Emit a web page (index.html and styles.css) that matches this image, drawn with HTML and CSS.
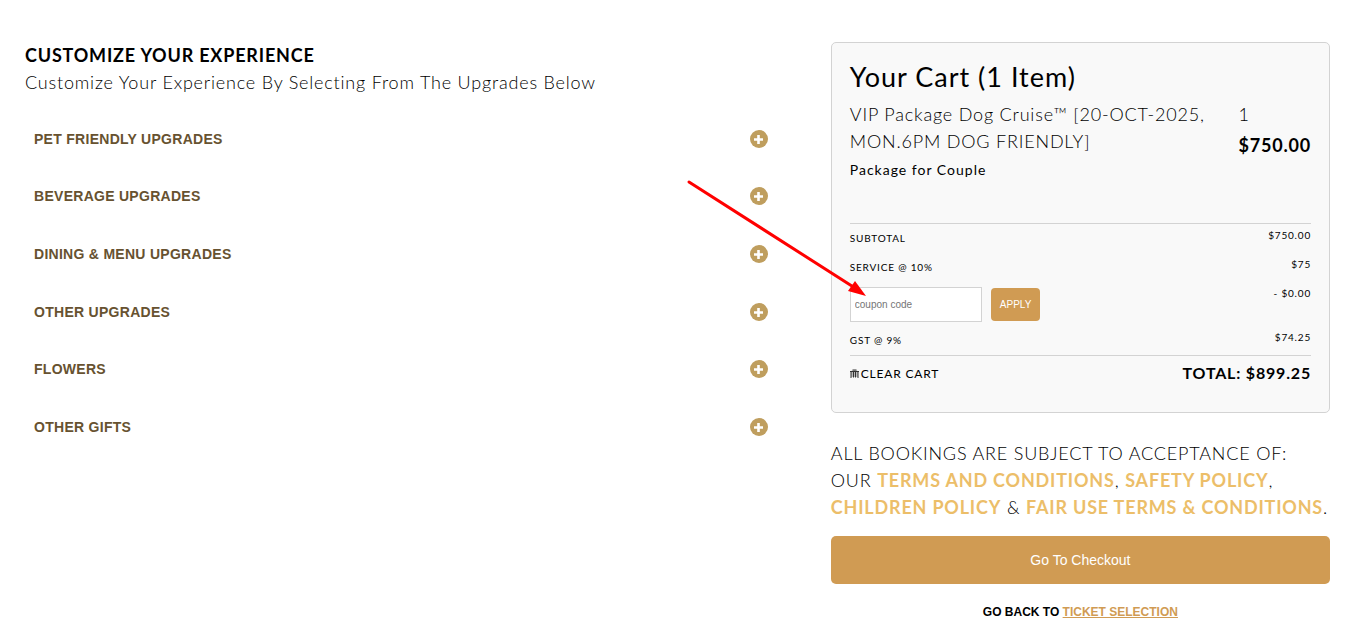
FILE: index.html
```html
<!DOCTYPE html>
<html lang="en">
<head>
  <meta charset="UTF-8" />
  <meta name="viewport" content="width=device-width, initial-scale=1" />
  <title>Customize Your Experience</title>
  <link rel="stylesheet" href="styles.css">
</head>
<body>
  <!-- plus icon shared by the upgrade rows -->
  <svg class="sprite" aria-hidden="true">
    <symbol id="plus" viewBox="0 0 18 18">
      <circle cx="9" cy="9" r="9" fill="#bf9e5e" />
      <path d="M8.5 5v9M4 9.5h9" stroke="#fff" stroke-width="2.6" />
    </symbol>
  </svg>

  <main class="page">
    <section class="upgrades">
      <h1>CUSTOMIZE YOUR EXPERIENCE</h1>
      <p class="intro">Customize Your Experience By Selecting From The Upgrades Below</p>

      <ul class="upgrade-list">
        <li><button type="button">PET FRIENDLY UPGRADES <svg class="plus"><use href="#plus" /></svg></button></li>
        <li><button type="button">BEVERAGE UPGRADES <svg class="plus"><use href="#plus" /></svg></button></li>
        <li><button type="button">DINING &amp; MENU UPGRADES <svg class="plus"><use href="#plus" /></svg></button></li>
        <li><button type="button">OTHER UPGRADES <svg class="plus"><use href="#plus" /></svg></button></li>
        <li><button type="button">FLOWERS <svg class="plus"><use href="#plus" /></svg></button></li>
        <li><button type="button">OTHER GIFTS <svg class="plus"><use href="#plus" /></svg></button></li>
      </ul>
    </section>

    <aside class="side">
      <div class="cart">
        <h2>Your Cart (1 Item)</h2>

        <div class="cart-item">
          <div class="item-info">
            <p class="item-name">VIP Package Dog Cruise™ [20-OCT-2025, MON.6PM DOG FRIENDLY]</p>
            <p class="item-type">Package for Couple</p>
          </div>
          <div class="item-cost">
            <p class="item-qty">1</p>
            <p class="item-price">$750.00</p>
          </div>
        </div>

        <div class="summary">
          <div class="row"><span>SUBTOTAL</span><span class="amount">$750.00</span></div>
          <div class="row"><span>SERVICE @ 10%</span><span class="amount">$75</span></div>
          <div class="row">
            <form class="coupon">
              <input type="text" placeholder="coupon code" aria-label="Coupon code" />
              <button type="button">APPLY</button>
              <svg class="arrow" viewBox="0 0 185 122" aria-hidden="true">
                <path d="M4 5L170 111" stroke="#f00" stroke-width="3" stroke-linecap="round" />
                <path d="M181 119L170 104L163 114Z" fill="#f00" />
              </svg>
            </form>
            <span class="amount">- $0.00</span>
          </div>
          <div class="row"><span>GST @ 9%</span><span class="amount">$74.25</span></div>
        </div>

        <div class="total-row">
          <button type="button" class="clear-cart">
            <svg viewBox="0 0 9 9">
              <path d="M1 3Q1 1 4.5 1Q8 1 8 3V8H1Z" fill="#bbb" />
              <path d="M1 9V3M8 9V3M0 2.5h9M2.500 1h4M3.500 3v5.500M5.500 3v5.500" fill="none" stroke="#333" />
            </svg>
            CLEAR CART
          </button>
          <strong class="total">TOTAL: $899.25</strong>
        </div>
      </div>

      <p class="terms">
        ALL BOOKINGS ARE SUBJECT TO ACCEPTANCE OF:<br>
        OUR <a href="#">TERMS AND CONDITIONS</a>, <a href="#">SAFETY POLICY</a>,
        <a href="#">CHILDREN POLICY</a> &amp; <a href="#">FAIR USE TERMS &amp; CONDITIONS</a>.
      </p>

      <button type="button" class="checkout">Go To Checkout</button>
      <p class="back">GO BACK TO <a href="#">TICKET SELECTION</a></p>
    </aside>
  </main>
</body>
</html>
```

FILE: styles.css
```css
* {
  margin: 0;
  padding: 0;
  box-sizing: border-box;
}

body {
  background: #fff;
  color: #000;
  font-family: Lato, sans-serif;
  font-size: 18px;
  font-weight: 300;
  line-height: 27px;
  letter-spacing: 0.045em;
}

button,
input {
  font-family: "Liberation Sans", Arial, sans-serif;
  border: none;
}

button {
  cursor: pointer;
}

.sprite {
  position: absolute;
  width: 0;
  height: 0;
}

.page {
  display: grid;
  grid-template-columns: 3fr 2fr;
  gap: 57px;
  padding: 42px 36px 16px 25px;
}

/* Upgrades */
h1 {
  font-size: 18px;
  font-weight: 700;
  line-height: 27px;
}

.upgrade-list {
  list-style: none;
  padding: 14px 6px 0 9px;
}

.upgrade-list li {
  height: 3.2em;
}

.upgrade-list button {
  display: flex;
  align-items: center;
  justify-content: space-between;
  width: 100%;
  height: 100%;
  background: none;
  color: #675230;
  font-size: 14px;
  font-weight: 700;
  letter-spacing: 0.02em;
}

.plus {
  width: 18px;
  height: 18px;
}

/* Cart */
.cart {
  background: #f9f9f9;
  border: 1px solid #d3d3d3;
  border-radius: 5px;
  padding: 16px 18px 22px;
}

h2 {
  font-size: 27px;
  font-weight: 400;
  line-height: 36px;
  letter-spacing: 1px;
  margin-bottom: 6px;
}

.cart-item {
  display: flex;
  justify-content: space-between;
  padding-bottom: 38px;
}

.item-info {
  width: 78%;
}

.item-type {
  font-size: 14px;
  font-weight: 400;
  line-height: 30px;
  letter-spacing: 1px;
}

.item-price {
  font-weight: 700;
  line-height: 34px;
}

.summary {
  border-top: 1px solid #d3d3d3;
  border-bottom: 1px solid #d3d3d3;
  font-size: 10px;
  font-weight: 400;
  line-height: 29px;
}

.row {
  display: flex;
  justify-content: space-between;
}

.amount {
  line-height: 23px;
}

.coupon {
  position: relative;
  display: flex;
  align-items: center;
  gap: 9px;
  padding: 5px 0 4px;
}

.coupon input {
  width: 132px;
  height: 35px;
  border: 1px solid #d3d3d3;
  padding: 0 4px;
  background: #fff;
  font-size: 10px;
}

.coupon input::placeholder {
  color: #757575;
}

.coupon button {
  height: 33px;
  padding: 0 9px;
  border-radius: 4px;
  background: #d09b53;
  color: #fff;
  font-size: 10px;
}

/* Pointer to the coupon field */
.arrow {
  position: absolute;
  left: -165px;
  top: -105px;
  width: 185px;
  height: 122px;
  pointer-events: none;
}

.total-row {
  display: flex;
  align-items: center;
  justify-content: space-between;
  line-height: 34px;
}

.clear-cart {
  display: flex;
  align-items: center;
  gap: 2px;
  background: none;
  color: #000;
  font-family: Lato, sans-serif;
  font-size: 12px;
  letter-spacing: inherit;
}

.clear-cart svg {
  width: 9px;
  height: 9px;
}

.total {
  font-size: 16px;
  font-weight: 700;
}

/* Terms and checkout */
.terms {
  margin: 27px 0 15px;
}

.terms a {
  color: #ecbe69;
  font-weight: 700;
  text-decoration: none;
}

.checkout {
  display: block;
  width: 100%;
  height: 48px;
  border-radius: 5px;
  background: #d09b53;
  color: #fff;
  font-size: 14px;
}

.back {
  margin-top: 15px;
  font-family: "Liberation Sans", Arial, sans-serif;
  font-size: 12px;
  font-weight: 700;
  letter-spacing: 0;
  text-align: center;
}

.back a {
  color: #d09b53;
}
```
